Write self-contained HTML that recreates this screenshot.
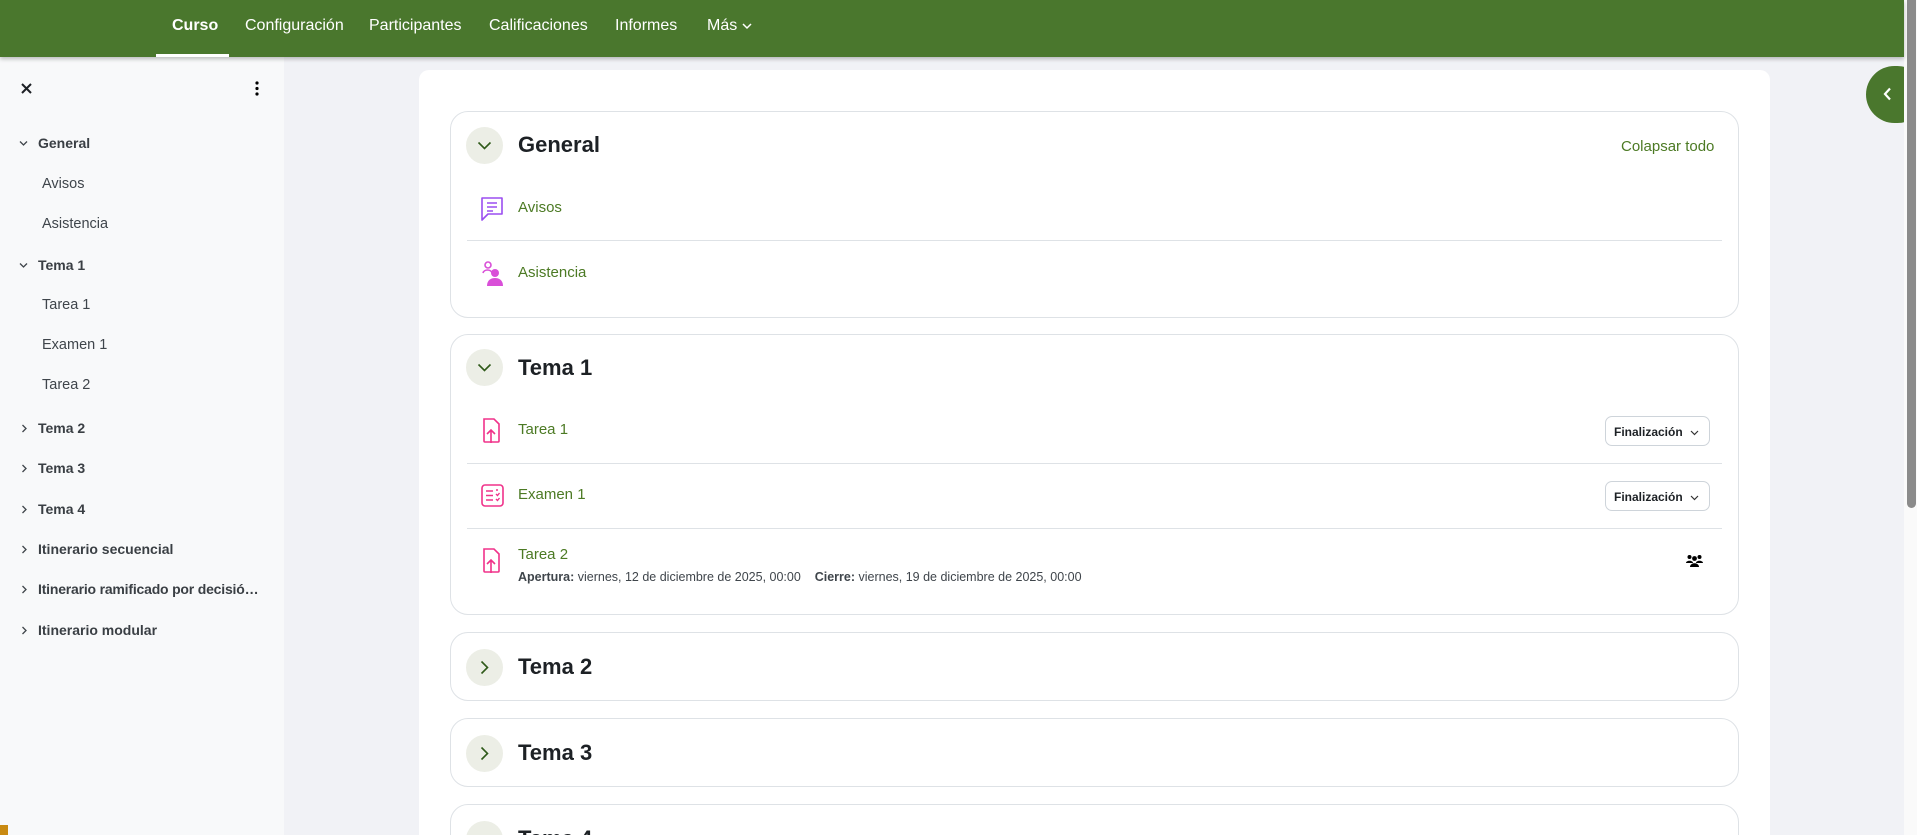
<!DOCTYPE html>
<html style="overflow:hidden;width:1917px;height:835px"><head><meta charset="utf-8"><style>
*{box-sizing:border-box;margin:0;padding:0}
body{width:1917px;height:835px;overflow:hidden;background:#f1f2f6;font-family:"Liberation Sans",sans-serif;color:#1d2125}
#w{position:relative;width:1917px;height:835px;overflow:hidden}
.a{position:absolute;white-space:nowrap}
.nav{position:absolute;left:0;top:0;width:1904px;height:57px;background:#4a772d;box-shadow:0 2px 4px rgba(0,0,0,.25);z-index:3}
.nav span{position:absolute;top:17px;color:#fff;font-size:16px}
.side{position:absolute;left:0;top:57px;width:284px;height:778px;background:#f8f9fa}
.si{position:absolute;font-size:14.5px;color:#3f454b}
.sb{font-weight:bold;color:#3a3f44;left:38px;font-size:14px}
.sub{left:42px}
.chev{position:absolute;left:19px}
.card{position:absolute;left:419px;top:70px;width:1351px;height:800px;background:#fff;border-radius:10px}
.sec{position:absolute;left:450px;width:1289px;border:1px solid #dee2e6;border-radius:18px;background:#fff}
.circ{position:absolute;width:37px;height:37px;border-radius:50%;background:#eceee6}
.title{position:absolute;font-size:22px;font-weight:bold;color:#1d2125}
.link{position:absolute;font-size:15px;color:#4c7a24}
.div{position:absolute;left:467px;width:1255px;height:1px;background:#dee2e6}
.btn{position:absolute;left:1605px;width:105px;height:30px;border:1px solid #ced4da;border-radius:7px;font-size:12px;font-weight:bold;padding:8px 0 0 8px;color:#1d2125}
</style></head><body><div id="w">
<div class="nav">
<span style="left:172px;font-weight:bold">Curso</span>
<div class="a" style="left:156px;top:54px;width:73px;height:3px;background:#fff"></div>
<span style="left:245px">Configuración</span>
<span style="left:369px">Participantes</span>
<span style="left:489px">Calificaciones</span>
<span style="left:615px">Informes</span>
<span style="left:707px">Más <svg width="10" height="8" viewBox="0 0 10 8"><path d="M1 2l4 4 4-4" stroke="#fff" stroke-width="1.5" fill="none"/></svg></span>
</div>
<div class="side">
<svg class="a" style="left:21px;top:26px" width="11" height="11" viewBox="0 0 11 11"><path d="M1 1l9 9M10 1l-9 9" stroke="#1d2125" stroke-width="2"/></svg>
<svg class="a" style="left:255px;top:24px" width="4" height="15" viewBox="0 0 4 15"><circle cx="2" cy="2" r="1.6"/><circle cx="2" cy="7.5" r="1.6"/><circle cx="2" cy="13" r="1.6"/></svg>
</div>
<div class="a" style="left:0;top:0;width:284px;height:835px">
<svg class="chev" style="top:140px" width="9" height="7" viewBox="0 0 9 7"><path d="M1 1.5l3.5 3.5 3.5-3.5" stroke="#3f454b" stroke-width="1.3" fill="none"/></svg>
<div class="si sb" style="top:135px">General</div>
<div class="si sub" style="top:176px">Avisos</div>
<div class="si sub" style="top:216px">Asistencia</div>
<svg class="chev" style="top:262px" width="9" height="7" viewBox="0 0 9 7"><path d="M1 1.5l3.5 3.5 3.5-3.5" stroke="#3f454b" stroke-width="1.3" fill="none"/></svg>
<div class="si sb" style="top:257px">Tema 1</div>
<div class="si sub" style="top:297px">Tarea 1</div>
<div class="si sub" style="top:337px">Examen 1</div>
<div class="si sub" style="top:377px">Tarea 2</div>
<div class="si sb" style="top:420px">Tema 2</div>
<div class="si sb" style="top:460px">Tema 3</div>
<div class="si sb" style="top:501px">Tema 4</div>
<div class="si sb" style="top:541px">Itinerario secuencial</div>
<div class="si sb" style="top:581px;letter-spacing:-0.2px">Itinerario ramificado por decisió…</div>
<div class="si sb" style="top:622px">Itinerario modular</div>
<svg class="chev" style="left:21px;top:424px" width="7" height="9" viewBox="0 0 7 9"><path d="M1.5 1l3.5 3.5-3.5 3.5" stroke="#3f454b" stroke-width="1.3" fill="none"/></svg>
<svg class="chev" style="left:21px;top:464px" width="7" height="9" viewBox="0 0 7 9"><path d="M1.5 1l3.5 3.5-3.5 3.5" stroke="#3f454b" stroke-width="1.3" fill="none"/></svg>
<svg class="chev" style="left:21px;top:505px" width="7" height="9" viewBox="0 0 7 9"><path d="M1.5 1l3.5 3.5-3.5 3.5" stroke="#3f454b" stroke-width="1.3" fill="none"/></svg>
<svg class="chev" style="left:21px;top:545px" width="7" height="9" viewBox="0 0 7 9"><path d="M1.5 1l3.5 3.5-3.5 3.5" stroke="#3f454b" stroke-width="1.3" fill="none"/></svg>
<svg class="chev" style="left:21px;top:585px" width="7" height="9" viewBox="0 0 7 9"><path d="M1.5 1l3.5 3.5-3.5 3.5" stroke="#3f454b" stroke-width="1.3" fill="none"/></svg>
<svg class="chev" style="left:21px;top:626px" width="7" height="9" viewBox="0 0 7 9"><path d="M1.5 1l3.5 3.5-3.5 3.5" stroke="#3f454b" stroke-width="1.3" fill="none"/></svg>
</div>
<div class="a" style="left:0;top:825px;width:8px;height:10px;background:#c98a12"></div>

<div class="card"></div>

<div class="sec" style="top:111px;height:207px"></div>
<div class="circ" style="left:466px;top:127px"></div>
<svg class="a" style="left:477px;top:141px" width="15" height="9" viewBox="0 0 15 9"><path d="M1.5 1.5l6 6 6-6" stroke="#2f5a1a" stroke-width="1.6" fill="none"/></svg>
<div class="title" style="left:518px;top:132px">General</div>
<div class="link" style="left:1621px;top:138px">Colapsar todo</div>
<svg class="a" style="left:480px;top:195px" width="25" height="27" viewBox="0 0 25 27"><path d="M2 3h20v16H8l-6 6z" stroke="#9b4ef0" stroke-width="1.6" fill="none" stroke-linejoin="round"/><path d="M7 8h10M7 12h10M7 16h6" stroke="#9b4ef0" stroke-width="1.6"/></svg>
<div class="link" style="left:518px;top:199px">Avisos</div>
<div class="div" style="top:240px"></div>
<svg class="a" style="left:480px;top:259px" width="26" height="28" viewBox="0 0 26 28"><circle cx="8" cy="6" r="3" stroke="#d94fd8" stroke-width="1.6" fill="none"/><path d="M3 14c1-4 8-4 9 0" stroke="#d94fd8" stroke-width="1.6" fill="none"/><circle cx="15" cy="14" r="4" fill="#d94fd8"/><path d="M7 27c0-6 4-8 8-8s8 2 8 8z" fill="#d94fd8"/></svg>
<div class="link" style="left:518px;top:264px">Asistencia</div>

<div class="sec" style="top:334px;height:281px"></div>
<div class="circ" style="left:466px;top:349px"></div>
<svg class="a" style="left:477px;top:363px" width="15" height="9" viewBox="0 0 15 9"><path d="M1.5 1.5l6 6 6-6" stroke="#2f5a1a" stroke-width="1.6" fill="none"/></svg>
<div class="title" style="left:518px;top:355px">Tema 1</div>
<svg class="a" style="left:482px;top:418px" width="18" height="26" viewBox="0 0 18 26"><path d="M2 1h10l5 5v17a1 1 0 0 1-1 1H3a1 1 0 0 1-1-1z" stroke="#f0328a" stroke-width="1.6" fill="none"/><path d="M9 25V13M5 16l4-4 4 4" stroke="#f0328a" stroke-width="1.6" fill="none"/></svg>
<div class="link" style="left:518px;top:421px">Tarea 1</div>
<div class="btn" style="top:416px">Finalización <svg width="9" height="6" viewBox="0 0 9 6" style="margin-left:4px"><path d="M1 1l3.5 3.5L8 1" stroke="#333" stroke-width="1.2" fill="none"/></svg></div>
<div class="div" style="top:463px"></div>
<svg class="a" style="left:481px;top:484px" width="23" height="23" viewBox="0 0 23 23"><rect x="1" y="1" width="21" height="21" rx="3" stroke="#f0328a" stroke-width="1.6" fill="none"/><path d="M5 7h7M5 11.5h7M5 16h7" stroke="#f0328a" stroke-width="1.6"/><path d="M15 6h2M15 10l1.5 1.5 2-2.5M15 15l1.5 1.5 2-2.5" stroke="#f0328a" stroke-width="1.4" fill="none"/></svg>
<div class="link" style="left:518px;top:486px">Examen 1</div>
<div class="btn" style="top:481px">Finalización <svg width="9" height="6" viewBox="0 0 9 6" style="margin-left:4px"><path d="M1 1l3.5 3.5L8 1" stroke="#333" stroke-width="1.2" fill="none"/></svg></div>
<div class="div" style="top:528px"></div>
<svg class="a" style="left:482px;top:548px" width="18" height="26" viewBox="0 0 18 26"><path d="M2 1h10l5 5v17a1 1 0 0 1-1 1H3a1 1 0 0 1-1-1z" stroke="#f0328a" stroke-width="1.6" fill="none"/><path d="M9 25V13M5 16l4-4 4 4" stroke="#f0328a" stroke-width="1.6" fill="none"/></svg>
<div class="link" style="left:518px;top:546px">Tarea 2</div>
<div class="a" style="left:518px;top:570px;font-size:12.5px;color:#3f454b"><b>Apertura:</b> viernes, 12 de diciembre de 2025, 00:00 &nbsp;&nbsp; <b>Cierre:</b> viernes, 19 de diciembre de 2025, 00:00</div>
<svg class="a" style="left:1686px;top:554px" width="17" height="13" viewBox="0 0 17 13"><circle cx="3.5" cy="3" r="2"/><circle cx="13.5" cy="3" r="2"/><circle cx="8.5" cy="4.5" r="2.4"/><path d="M0 9c0-3 7-3 7 0zM10 9c0-3 7-3 7 0z"/><path d="M4 13c0-5 9-5 9 0z"/></svg>

<div class="sec" style="top:632px;height:69px"></div>
<div class="circ" style="left:466px;top:649px"></div>
<svg class="a" style="left:480px;top:660px" width="9" height="15" viewBox="0 0 9 15"><path d="M1.5 1.5l6 6-6 6" stroke="#2f5a1a" stroke-width="1.6" fill="none"/></svg>
<div class="title" style="left:518px;top:654px">Tema 2</div>
<div class="sec" style="top:718px;height:69px"></div>
<div class="circ" style="left:466px;top:735px"></div>
<svg class="a" style="left:480px;top:746px" width="9" height="15" viewBox="0 0 9 15"><path d="M1.5 1.5l6 6-6 6" stroke="#2f5a1a" stroke-width="1.6" fill="none"/></svg>
<div class="title" style="left:518px;top:740px">Tema 3</div>
<div class="sec" style="top:804px;height:69px"></div>
<div class="circ" style="left:466px;top:821px"></div>
<div class="title" style="left:518px;top:826px">Tema 4</div>

<div class="a" style="left:1866px;top:66px;width:60px;height:57px;border-radius:29px;background:#4a772d"></div>
<svg class="a" style="left:1883px;top:87px" width="9" height="14" viewBox="0 0 9 14"><path d="M7 1.5L2 7l5 5.5" stroke="#fff" stroke-width="2.2" fill="none"/></svg>
<div class="a" style="left:1904px;top:0;width:13px;height:835px;background:#fafafa"></div>
<div class="a" style="left:1907px;top:0;width:9px;height:508px;background:#8b8b8b;border-radius:0 0 5px 5px"></div>
</div></body></html>
